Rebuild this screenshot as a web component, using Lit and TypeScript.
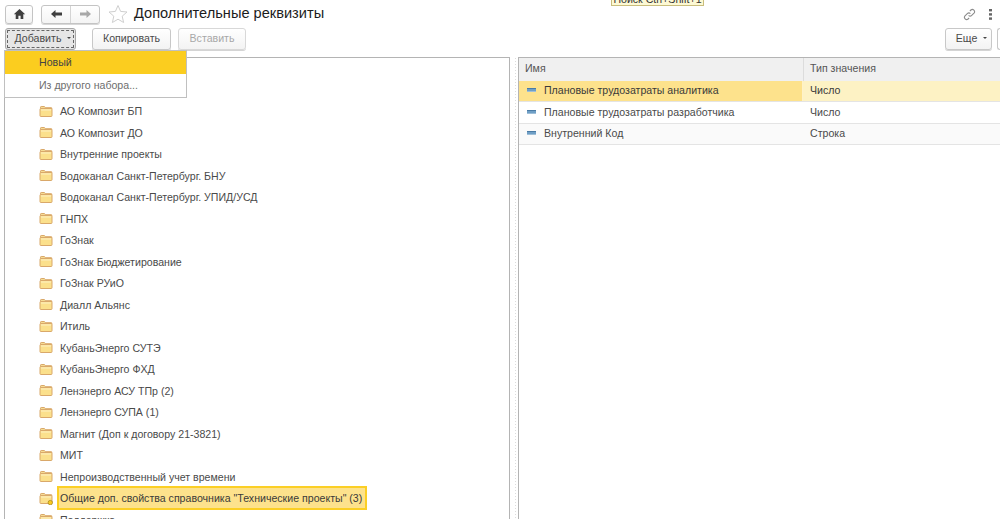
import { LitElement, html, css, svg } from "lit";
import { customElement } from "lit/decorators.js";

const folders = [
  "АО Композит БП",
  "АО Композит ДО",
  "Внутренние проекты",
  "Водоканал Санкт-Петербург. БНУ",
  "Водоканал Санкт-Петербург. УПИД/УСД",
  "ГНПХ",
  "ГоЗнак",
  "ГоЗнак Бюджетирование",
  "ГоЗнак РУиО",
  "Диалл Альянс",
  "Итиль",
  "КубаньЭнерго СУТЭ",
  "КубаньЭнерго ФХД",
  "Ленэнерго АСУ ТПр (2)",
  "Ленэнерго СУПА (1)",
  "Магнит (Доп к договору 21-3821)",
  "МИТ",
  "Непроизводственный учет времени",
];

const attrs = [
  { name: "Плановые трудозатраты аналитика", type: "Число", cls: "sel" },
  { name: "Плановые трудозатраты разработчика", type: "Число", cls: "" },
  { name: "Внутренний Код", type: "Строка", cls: "alt" },
];

const folderIcon = (badge = false) => html`<svg class="folder" width="14" height="13" viewBox="0 0 14 13">
  <path d="M1.5 3.5V2.2q0-.7.7-.7h3q.5 0 .8.5l.5.7h5.8q.7 0 .7.7v.1z" fill="#f6dc94" stroke="#d9a86a"/>
  <rect x="1" y="3.5" width="12" height="8" rx=".8" fill="#fbe08c" stroke="#d9a86a"/>
  <path d="M2 5h10" stroke="#fdf0c4"/>
  ${badge
    ? svg`<circle cx="11.3" cy="10.6" r="2.2" fill="#f9c81e" stroke="#a98a1c" stroke-width=".8"/>`
    : null}
</svg>`;

@customElement("app-root")
export class AppRoot extends LitElement {
  static styles = css`
    :host {
      display: flex;
      flex-direction: column;
      position: relative;
      width: 1000px;
      height: 519px;
      overflow: hidden;
      background: #fff;
      font-family: "Liberation Sans", Arial, sans-serif;
      font-size: 10.6px;
      color: #4a4a4a;
    }
    svg {
      display: block;
    }
    .top {
      display: flex;
      align-items: center;
      height: 25px;
      padding: 3px 0 0 5px;
      box-sizing: border-box;
    }
    .navbtn {
      display: flex;
      align-items: center;
      justify-content: center;
      height: 19px;
      box-sizing: border-box;
      border: 1px solid #c4c4c4;
      border-radius: 3px;
      background: linear-gradient(#fff, #f4f4f4);
      box-shadow: 0 1px 0 #d8d8d8;
    }
    .home {
      width: 28px;
      margin-right: 8px;
    }
    .nav {
      width: 59px;
      margin-right: 8px;
    }
    .nav span {
      flex: 1;
      height: 100%;
      display: flex;
      align-items: center;
      justify-content: center;
    }
    .nav span + span {
      border-left: 1px solid #d4d4d4;
    }
    .star {
      margin-right: 7px;
    }
    h1 {
      margin: 0 0 2px -1px;
      font-size: 14.6px;
      font-weight: 400;
      color: #1c1c1c;
      flex: 1;
    }
    .link {
      margin-right: 13px;
    }
    .dots {
      margin-right: 8px;
    }
    .toolbar {
      display: flex;
      align-items: flex-start;
      height: 32px;
      padding: 3px 0 0 5px;
      box-sizing: border-box;
    }
    .btn {
      display: flex;
      align-items: center;
      justify-content: center;
      height: 22px;
      padding-bottom: 2px;
      box-sizing: border-box;
      border: 1px solid #c8c8c8;
      border-radius: 3px;
      background: linear-gradient(#fff, #f3f3f3);
      box-shadow: 0 1px 0 #d4d4d4;
      color: #4a4a4a;
      white-space: nowrap;
    }
    .add {
      width: 71px;
      margin-right: 16px;
      padding-left: 5px;
      background: #e6e6e6;
      border-color: #a8a8a8;
      outline: 1px dashed #666;
      outline-offset: -3px;
      box-shadow: none;
    }
    .copy {
      width: 79px;
      margin-right: 7px;
    }
    .paste {
      width: 68px;
      color: #a8a8a8;
      border-color: #d8d8d8;
    }
    .more {
      width: 47px;
      margin-left: auto;
      margin-right: 5px;
      padding-left: 6px;
    }
    .edge {
      width: 3px;
      height: 22px;
      border: 1px solid #c8c8c8;
      border-right: 0;
      box-sizing: border-box;
      border-radius: 3px 0 0 3px;
    }
    .caret {
      width: 0;
      height: 0;
      margin-left: 6px;
      border-left: 2px solid transparent;
      border-right: 2px solid transparent;
      border-top: 2px solid #444;
    }
    .panels {
      flex: 1;
      min-height: 0;
      display: flex;
      padding-left: 4px;
    }
    .tree {
      width: 506px;
      box-sizing: border-box;
      border: 1px solid #b4b4b4;
      border-bottom: 0;
      padding-top: 42.5px;
      overflow: hidden;
    }
    .node {
      display: flex;
      align-items: center;
      height: 21.5px;
      padding-left: 34px;
      white-space: nowrap;
    }
    .node span {
      margin-left: 7px;
    }
    .node.current span {
      margin-left: 4px;
      padding: 3px 3px 3px 1px;
      border: 2px solid #fbcf25;
      background: #fde28c;
      color: #3a3a3a;
      line-height: 14px;
    }
    .split {
      width: 8px;
      background: radial-gradient(circle, #dcdcdc 0.8px, transparent 1px) 4px 0 / 3px 3px repeat-y;
    }
    .grid {
      flex: 1;
      border-top: 1px solid #b4b4b4;
      border-left: 1px solid #b4b4b4;
    }
    .row {
      display: grid;
      grid-template-columns: 284px 1fr;
      height: 21.4px;
      align-items: center;
      border-bottom: 1px solid #e4e4e4;
      box-sizing: border-box;
    }
    .row.head {
      height: 23px;
      background: #f0f0f0;
      border-bottom: 0;
      color: #555;
    }
    .row > div {
      height: 100%;
      display: flex;
      align-items: center;
      padding-bottom: 2px;
      box-sizing: border-box;
    }
    .row.head > div {
      padding-left: 6px;
      padding-bottom: 3px;
    }
    .head > div + div {
      border-left: 1px solid #dcdcdc;
    }
    .cname {
      padding-left: 8px;
    }
    .ctype {
      padding-left: 7px;
    }
    .cname span {
      margin-left: 8px;
    }
    .row.sel .cname {
      background: #fde28c;
      border-right: 1px solid #fff2c8;
      color: #3a3a3a;
    }
    .row.sel .ctype {
      background: #fdf2c4;
      color: #3a3a3a;
    }
    .row.alt {
      background: #fafafa;
    }
    .dash {
      width: 9px;
      height: 4px;
      background: #6f9fc6;
      border-top: 1px solid #4a7ba5;
      border-bottom: 1px solid #9fbfd8;
      box-sizing: border-box;
    }
    .menu {
      position: absolute;
      left: 4px;
      top: 50px;
      width: 183px;
      height: 48px;
      box-sizing: border-box;
      border: 1px solid #c0c0c0;
      background: #fff;
    }
    .menu div {
      height: 23px;
      display: flex;
      align-items: center;
      padding-left: 34px;
      padding-bottom: 1px;
      box-sizing: border-box;
    }
    .menu .on {
      background: #fbcd1f;
      color: #444;
    }
    .menu .off {
      color: #6e6e6e;
    }
    .tip {
      position: absolute;
      left: 611px;
      top: -8px;
      width: 93px;
      height: 14px;
      box-sizing: border-box;
      border: 1px solid #c9bd7c;
      background: #fdf9d4;
      color: #333;
      text-align: center;
      white-space: nowrap;
      line-height: 13px;
    }
  `;

  render() {
    return html`
      <div class="top">
        <div class="navbtn home">
          <svg width="13" height="12" viewBox="0 0 13 12">
            <path d="M6.5 1 .8 6.2h1.9V11h2.7V7.8h2.2V11h2.7V6.2h1.9z" fill="#3f3f3f" />
          </svg>
        </div>
        <div class="navbtn nav">
          <span>
            <svg width="13" height="10" viewBox="0 0 13 10">
              <path d="M5.5 1 1 5l4.5 4V6.4H12V3.6H5.5z" fill="#3f3f3f" />
            </svg>
          </span>
          <span>
            <svg width="13" height="10" viewBox="0 0 13 10">
              <path d="M7.5 1 12 5 7.5 9V6.4H1V3.6h6.5z" fill="#a8a8a8" />
            </svg>
          </span>
        </div>
        <svg class="star" width="20" height="20" viewBox="0 0 20 20">
          <path
            d="M10 1.5l2.6 5.9 6.4.6-4.8 4.2 1.4 6.3L10 15.2l-5.6 3.3 1.4-6.3L1 8l6.4-.6z"
            fill="#fff"
            stroke="#cfcfcf"
          />
        </svg>
        <h1>Дополнительные реквизиты</h1>
        <svg class="link" width="13" height="13" viewBox="0 0 13 13" fill="none" stroke="#8c8c8c" stroke-width="1.1">
          <path d="M5.6 7.4a2.2 2.2 0 0 0 3.1 0l2.3-2.3A2.2 2.2 0 0 0 7.9 2L6.9 3" />
          <path d="M7.4 5.6a2.2 2.2 0 0 0-3.1 0L2 7.9A2.2 2.2 0 0 0 5.1 11l1-1" />
        </svg>
        <svg class="dots" width="3" height="11" viewBox="0 0 3 11" fill="#666">
          <rect y="0" width="3" height="2.4" />
          <rect y="4.2" width="3" height="2.4" />
          <rect y="8.4" width="3" height="2.4" />
        </svg>
      </div>
      <div class="toolbar">
        <div class="btn add">Добавить<i class="caret"></i></div>
        <div class="btn copy">Копировать</div>
        <div class="btn paste">Вставить</div>
        <div class="btn more">Еще<i class="caret"></i></div>
        <div class="edge"></div>
      </div>
      <div class="panels">
        <div class="tree">
          ${folders.map((f) => html`<div class="node">${folderIcon()}<span>${f}</span></div>`)}
          <div class="node current">
            ${folderIcon(true)}<span>Общие доп. свойства справочника "Технические проекты" (3)</span>
          </div>
          <div class="node">${folderIcon()}<span>Поддержка</span></div>
        </div>
        <div class="split"></div>
        <div class="grid">
          <div class="row head">
            <div>Имя</div>
            <div>Тип значения</div>
          </div>
          ${attrs.map(
            (a) => html`<div class="row ${a.cls}">
              <div class="cname"><i class="dash"></i><span>${a.name}</span></div>
              <div class="ctype">${a.type}</div>
            </div>`
          )}
        </div>
      </div>
      <div class="menu">
        <div class="on">Новый</div>
        <div class="off">Из другого набора...</div>
      </div>
      <div class="tip">Поиск Ctrl+Shift+1</div>
    `;
  }
}
